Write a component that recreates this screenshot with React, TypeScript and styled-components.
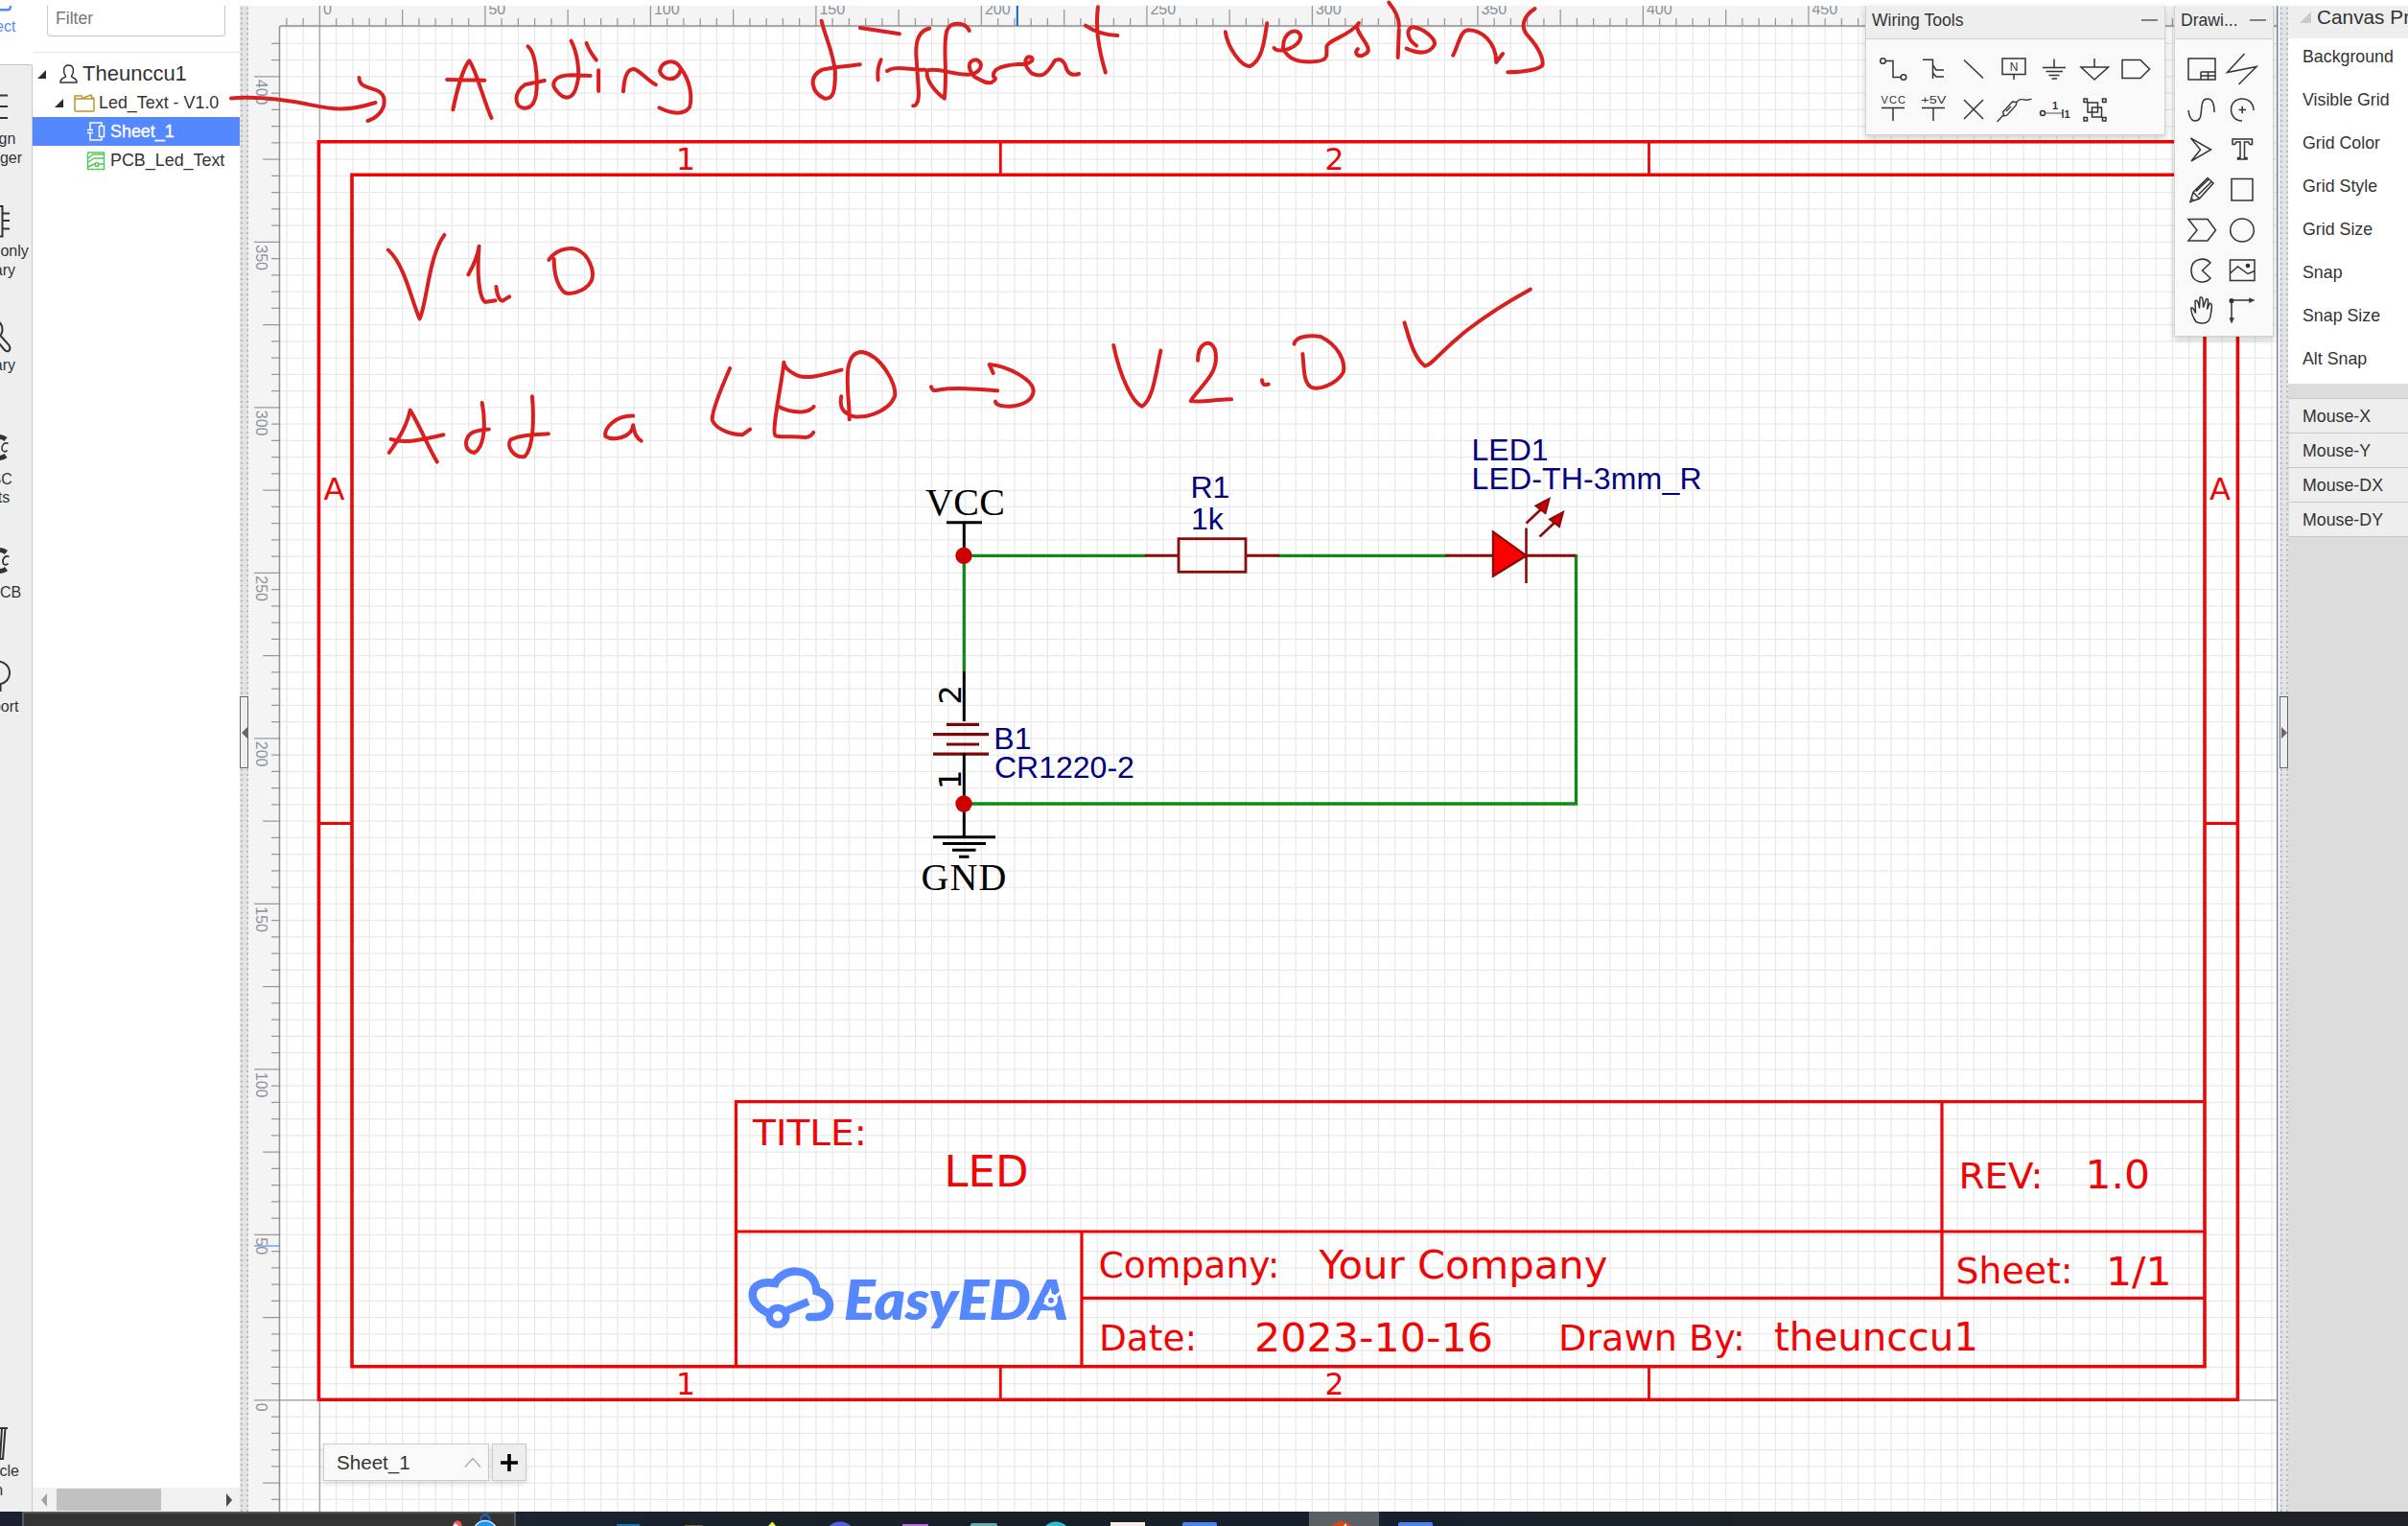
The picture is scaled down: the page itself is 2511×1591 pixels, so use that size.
import React from "react";
import styled, { createGlobalStyle } from "styled-components";

const GlobalStyle = createGlobalStyle`
  html, body, #root { margin: 0; height: 100%; }
  body { background: #fff; overflow: hidden; font-family: "Liberation Sans", Arial, sans-serif; color: #333; }
  * { box-sizing: border-box; }
`;

/* ---------- page frame ---------- */
const Page = styled.div`
  position: relative;
  display: flex;
  flex-direction: column;
  width: 2511px;
  height: 1591px;
  padding-top: 6px;
  overflow: hidden;
  background: #fff;
`;
const Main = styled.div`
  display: flex;
  flex: 1;
  min-height: 0;
`;
const Splitter = styled.div`
  flex: none;
  display: flex;
  flex-direction: column;
  width: 9px;
  padding-top: 720px;
  background-color: #e3e3e3;
  background-image: radial-gradient(circle, #b4b4b4 0.9px, transparent 1.3px);
  background-size: 6px 5.34px;
  background-position: -1px 0;
`;
const Handle = styled.div<{ $dir: "left" | "right" }>`
  display: flex;
  align-items: center;
  justify-content: flex-end;
  height: 75px;
  border: 1px solid #6b6464;
  background: #f0efef;
  &::after {
    content: "";
    border: 6px solid transparent;
    border-width: 6px ${(p) => (p.$dir === "left" ? "6px 6px 0" : "0 6px 6px")};
    ${(p) => (p.$dir === "left" ? "border-right-color" : "border-left-color")}: #6b6464;
  }
`;

/* ---------- left navigation ---------- */
const Nav = styled.nav`
  flex: none;
  width: 34px;
  display: flex;
  flex-direction: column;
  overflow: hidden;
  background: #eee;
`;
const NavItem = styled.div<{ $h: number; $top: number; $active?: boolean }>`
  flex: none;
  display: flex;
  flex-direction: column;
  align-items: center;
  width: 84px;
  height: ${(p) => p.$h}px;
  margin-left: -50px;
  padding-top: ${(p) => p.$top}px;
  border-right: 1px solid ${(p) => (p.$active ? "#fff" : "#c8c8c8")};
  border-bottom: ${(p) => (p.$active ? "1px solid #c8c8c8" : "0")};
  background: ${(p) => (p.$active ? "#fff" : "#eee")};
  color: ${(p) => (p.$active ? "#5588ff" : "#333")};
  font-size: 16px;
  line-height: 19.5px;
  text-align: center;
`;
const NavGlyph = styled.svg.attrs({ viewBox: "0 0 36 36" })`
  flex: none;
  width: 36px;
  height: 36px;
  margin: 0 0 8px 16px;
  overflow: visible;
  fill: none;
  stroke: currentColor;
  stroke-width: 2;
`;
const ActiveGlyph = styled.svg.attrs({ viewBox: "0 0 36 6" })`
  flex: none;
  width: 36px;
  height: 6px;
  margin: 0 0 6px 16px;
  fill: none;
  stroke: currentColor;
  stroke-width: 2.4;
`;

/* ---------- project tree ---------- */
const Tree = styled.aside`
  flex: none;
  width: 216px;
  display: flex;
  flex-direction: column;
  background: #fff;
`;
const FilterBox = styled.div`
  height: 49px;
  padding: 0 15px;
  border-bottom: 1px solid #e6e6e6;
`;
const Filter = styled.div`
  height: 32px;
  padding: 3px 8px;
  border: 1px solid #c6c6c6;
  border-top: 0;
  border-radius: 0 0 4px 4px;
  color: #757575;
  font-size: 17.6px;
  line-height: 20px;
`;
const Row = styled.div<{ $indent: number; $selected?: boolean; $big?: boolean }>`
  display: flex;
  align-items: center;
  height: 30px;
  margin-top: ${(p) => (p.$big ? 7 : 0)}px;
  padding-left: ${(p) => p.$indent}px;
  font-size: ${(p) => (p.$big ? 22 : 17.9)}px;
  white-space: nowrap;
  background: ${(p) => (p.$selected ? "#5588ff" : "transparent")};
  color: ${(p) => (p.$selected ? "#fff" : "#333")};
  -webkit-text-stroke: ${(p) => (p.$selected ? "0.3px #fff" : "0")};
`;
const Caret = styled.span<{ $gap: number }>`
  border-left: 9px solid transparent;
  border-bottom: 9px solid #2c2c2c;
  margin-right: ${(p) => p.$gap}px;
`;
const TreeIcon = styled.svg<{ $gap: number }>`
  flex: none;
  width: 22px;
  height: 22px;
  margin-right: ${(p) => p.$gap}px;
  fill: none;
  stroke-width: 1.5;
`;
const HScroll = styled.div`
  display: flex;
  align-items: center;
  height: 25px;
  margin-top: auto;
  padding: 0 8px;
  background: #f1f1f1;
`;
const Arrow = styled.i<{ $dir: "left" | "right" }>`
  border: 7px solid transparent;
  ${(p) => (p.$dir === "left"
    ? "border-left-width: 0; border-right: 6px solid #a3a3a3; margin-left: 1px;"
    : "border-right-width: 0; border-left: 6px solid #4a4a4a; margin-left: auto;")}
`;
const Thumb = styled.div`
  width: 109px;
  height: 23px;
  margin-left: 10px;
  background: #c1c1c1;
`;

/* ---------- canvas ---------- */
const Workspace = styled.main`
  position: relative;
  flex: none;
  width: 2118px;
  height: 100%;
`;
const Sheet = styled.svg`
  display: block;
  width: 2118px;
  height: 1570px;
`;
const FrameText = styled.text`
  font-family: Verdana, "DejaVu Sans", sans-serif;
  fill: #f00505;
`;
const PinText = styled(FrameText)`
  font-size: 32px;
  fill: #000;
`;
const RulerText = styled.text`
  font-family: "Liberation Sans", sans-serif;
  font-size: 16px;
  fill: #8b929b;
`;
const PartText = styled.text`
  font-family: "Liberation Sans", Arial, sans-serif;
  font-size: 32px;
  fill: #000080;
`;
const NetText = styled.text`
  font-family: "Liberation Serif", "Times New Roman", serif;
  font-size: 40px;
  fill: #000;
`;
const LogoText = styled.text`
  font-family: Lato, sans-serif;
  font-weight: 800;
  font-style: italic;
  font-size: 56px;
  fill: #5588ff;
`;

/* ---------- floating palettes ---------- */
const Palette = styled.section<{ $left: number; $width: number; $height: number }>`
  position: absolute;
  top: 0;
  left: ${(p) => p.$left}px;
  width: ${(p) => p.$width}px;
  height: ${(p) => p.$height}px;
  border: 1px solid #d3d3d3;
  border-top: 0;
  background: #f9f9f9;
  box-shadow: 0 3px 7px rgba(0, 0, 0, 0.2);
`;
const PaletteHead = styled.header`
  display: flex;
  align-items: center;
  justify-content: space-between;
  height: 35px;
  padding: 0 7px 4px 6px;
  border-bottom: 1px solid #cfcfcf;
  background: #eee;
  font-size: 17.6px;
`;
const Minus = styled.i`
  width: 17px;
  height: 2px;
  background: #808080;
`;
const Tools = styled.div<{ $cols: number; $pad: number }>`
  display: grid;
  grid-template-columns: repeat(${(p) => p.$cols}, 42.1px);
  grid-auto-rows: 42px;
  padding: 10px 0 0 ${(p) => p.$pad}px;
`;
const Glyph = styled.svg`
  width: 42px;
  height: 42px;
  fill: none;
  stroke: #333;
  stroke-width: 1.5;
  text { fill: #333; stroke: none; font-family: "Liberation Sans", sans-serif; }
`;

/* ---------- sheet tabs ---------- */
const Tabs = styled.div`
  position: absolute;
  left: 78px;
  top: 1499px;
  display: flex;
  gap: 3px;
  height: 39px;
`;
const Tab = styled.div`
  display: flex;
  align-items: center;
  justify-content: space-between;
  width: 173px;
  padding: 0 7px 0 13px;
  border: 1px solid #ccc;
  background: #f9f9f9;
  box-shadow: 0 3px 6px rgba(0, 0, 0, 0.12);
  font-size: 20.6px;
`;
const AddTab = styled.div`
  display: grid;
  place-items: center;
  width: 36px;
  border: 1px solid #c6cad2;
  background: #eee;
  box-shadow: 0 3px 6px rgba(0, 0, 0, 0.12);
`;

/* ---------- properties ---------- */
const Props = styled.aside`
  flex: 1;
  overflow: hidden;
  background: #dcdcdc;
`;
const PropsHead = styled.div`
  display: flex;
  align-items: center;
  height: 34px;
  padding: 0 0 11px 12px;
  background: #eee;
  font-size: 20.8px;
  white-space: nowrap;
  &::before {
    content: "";
    margin-right: 6px;
    border-left: 12px solid transparent;
    border-bottom: 12px solid #c9c9c9;
  }
`;
const PropList = styled.div`
  height: 360px;
  background: #fff;
`;
const Prop = styled.div`
  height: 45px;
  padding: 8px 0 0 15px;
  font-size: 17.8px;
  line-height: 22px;
`;
const MouseList = styled.div`
  margin: 15px 0 0 1px;
  border-top: 1px solid #c8c8c8;
`;
const MouseRow = styled.div`
  height: 36px;
  padding-left: 14px;
  border-bottom: 1px solid #c8c8c8;
  background: #eee;
  font-size: 17.8px;
  line-height: 36px;
`;

/* ---------- taskbar ---------- */
const Taskbar = styled.footer`
  flex: none;
  display: flex;
  align-items: flex-end;
  height: 15px;
  background: linear-gradient(90deg, #1c1f30 0, #1a242e 23%, #191f29 40%, #17222c 62%, #1e2226 76%, #202124 100%);
`;
const SearchBox = styled.div`
  width: 515px;
  height: 15px;
  margin-left: 23px;
  border: 2px solid #5a5a5a;
  border-bottom: 0;
  background: #333;
  svg { display: block; margin-left: auto; }
`;
const TaskIcons = styled.svg`
  display: block;
  width: 980px;
  height: 15px;
`;
const Ink = styled.svg`
  position: absolute;
  inset: 0;
  width: 2511px;
  height: 1591px;
  pointer-events: none;
  fill: none;
  stroke: #d92020;
  stroke-width: 4;
  stroke-linecap: round;
  stroke-linejoin: round;
  path { vector-effect: non-scaling-stroke; }
`;

const UNIT = 3.45;
const X0 = 333.4;
const Y0 = 1459.8;

const range = (n: number) => Array.from({ length: n }, (_, i) => i);

function Grid() {
  const d: string[] = [];
  for (let i = -2; i <= 118; i++) {
    const x = X0 + i * UNIT * 5;
    if (x > 292 && x < 2374) d.push(`M${x} 28V1576`);
  }
  for (let j = -6; j <= 83; j++) {
    const y = Y0 - j * UNIT * 5;
    if (y > 28) d.push(`M292 ${y}H2374`);
  }
  return <path d={d.join("")} stroke="#e9e9e9" strokeWidth="1.3" />;
}

function Rulers() {
  const top: string[] = [];
  for (let i = -2; i <= 118; i++) {
    const x = X0 + i * UNIT * 5;
    const start = i % 10 === 0 ? 6 : i % 5 === 0 ? 10 : 19;
    if (x < 2374) top.push(`M${x} ${start}V27`);
  }
  const side: string[] = [];
  for (let j = -6; j <= 82; j++) {
    const y = Y0 - j * UNIT * 5;
    const start = j % 10 === 0 ? 265 : j % 5 === 0 ? 274 : 283;
    side.push(`M${start} ${y}H291`);
  }
  return (
    <>
      <path d="M259 6H2374V27H291V1576H259Z" fill="#f4f4f4" />
      <path d={top.join("") + side.join("")} stroke="#999" strokeWidth="1.3" />
      <path d="M292 27H2374M291.5 27V1576" stroke="#909090" strokeWidth="1.5" fill="none" />
      {range(10).map((k) => (
        <RulerText key={k} x={X0 + k * 172.5 + 3.5} y="14.5">{k * 50}</RulerText>
      ))}
      {range(9).map((k) => (
        <RulerText key={k} transform={`translate(266.5 ${Y0 - k * 172.5 + 3})rotate(90)`}>{k * 50}</RulerText>
      ))}
      <path d="M1060.8 6V27" stroke="#0a64c8" strokeWidth="2" />
      <path d="M265 1299H292" stroke="#5b9be0" strokeWidth="1.3" />
    </>
  );
}

type Label = [string, number, number, number, number];
const frameLabels: Label[] = [
  ["TITLE:", 785, 1194, 36.5, 119],
  ["LED", 984.5, 1236.7, 44, 88],
  ["Company:", 1145.5, 1331.7, 36.5, 189],
  ["Your Company", 1375.5, 1332.7, 40, 301],
  ["Date:", 1146, 1408, 36.5, 102],
  ["2023-10-16", 1308, 1408.5, 40, 249],
  ["Drawn By:", 1625, 1408, 36.5, 195],
  ["theunccu1", 1850, 1407.7, 40, 213],
  ["REV:", 2042.5, 1238.7, 36.5, 88],
  ["1.0", 2174.5, 1239, 40, 67.5],
  ["Sheet:", 2039.5, 1338, 36.5, 122],
  ["1/1", 2196, 1340, 40, 68.5],
  ["1", 705, 176.7, 32, 20],
  ["2", 1381.5, 176.7, 32, 20],
  ["1", 705, 1454, 32, 20],
  ["2", 1381.5, 1454, 32, 20],
  ["A", 337.5, 520.7, 32, 22],
  ["A", 2304, 520.7, 32, 22],
];

function Frame() {
  return (
    <g>
      <g fill="none" stroke="#ee0606" strokeWidth="3.6">
        <path d="M332.4 147.7H2333.4V1459.3H332.4Z" />
        <path d="M367 182.3H2299V1424.7H367Z" />
        <path d="M1043.3 148V182M1719.5 148V182M1043.3 1425V1459M1719.5 1425V1459M332 858.5H367M2299 858.5H2333" strokeWidth="2.8" />
        <path d="M767.5 1424V1148.7H2299M767.5 1284H2299M1128 1284V1424M1128 1353.3H2299M2025 1148.7V1353.3" strokeWidth="3.2" />
      </g>
      {frameLabels.map(([t, x, y, s, w], i) => (
        <FrameText key={i} x={x} y={y} fontSize={s} textLength={w} lengthAdjust="spacingAndGlyphs">{t}</FrameText>
      ))}
      <g fill="none" stroke="#5588ff" strokeWidth="8.5" transform="translate(1 1)">
        <path d="M803 1369C776 1360 777 1331 808 1337" />
        <path d="M806 1341C810 1320 849 1317 850.5 1345C869 1349 869 1374 848 1372" />
        <path d="M848 1372H843" strokeLinecap="round" />
        <circle cx="810" cy="1371.3" r="8.8" strokeWidth="7.4" />
        <path d="M817 1366.5L842 1356" strokeWidth="8" />
      </g>
      <LogoText x="880" y="1376" textLength="234" lengthAdjust="spacingAndGlyphs">EasyEDA</LogoText>
      <circle cx="1096" cy="1355.7" r="5" fill="#5588ff" stroke="#fff" strokeWidth="4" />
      <path d="M1100 1352.5L1106 1347.5" stroke="#fff" strokeWidth="3" />
    </g>
  );
}

function Circuit() {
  return (
    <g fill="none" strokeWidth="3.3">
      <path d="M1005.3 579.3V700M1005 579.3H1195M1333 579.3H1508M1643.5 578V838H1005" stroke="#0f8a12" />
      <g stroke="#8b0a0a">
        <path d="M1194 579.3H1229M1299 579.3H1334M1507 579.3H1557M1591 579.3H1643" strokeWidth="3" />
        <rect x="1229" y="561.7" width="70" height="34.6" strokeWidth="2.8" />
        <path d="M1557 554.5V600.5L1591.5 579.3Z" fill="#f00" strokeWidth="2.4" />
        <path d="M1591.5 550.5V608M1591.5 545.5L1608 530M1605.5 559.5L1622 544" strokeWidth="2.6" />
        <path d="M1615.5 520L1601.5 527.5L1611.5 535ZM1630 534L1616 541.5L1626 549Z" fill="#c00" strokeWidth="2" />
      </g>
      <path
        d="M987 544.7H1024M1005.3 545V579M1005.3 700V752M1005.3 838V872M973 872.7H1038M983 879.5H1028M993 886.3H1017.5M1000 893.3H1010.5"
        stroke="#000"
        strokeWidth="3"
      />
      <path d="M987 755.3H1021M973 765.6H1031M987 776H1021M973 786.2H1031" stroke="#7b0808" strokeWidth="3.2" />
      <path d="M1005.3 785V838" stroke="#000" strokeWidth="3" />
      <circle cx="1005" cy="579.3" r="8.7" fill="#c00" />
      <circle cx="1005" cy="838" r="8.7" fill="#c00" />
      <NetText x="965" y="537" textLength="83">VCC</NetText>
      <NetText x="960.5" y="928" textLength="89">GND</NetText>
      <PartText x="1241.5" y="518.7">R1</PartText>
      <PartText x="1242" y="551.7">1k</PartText>
      <PartText x="1534.5" y="480">LED1</PartText>
      <PartText x="1534.5" y="510" textLength="240">LED-TH-3mm_R</PartText>
      <PartText x="1036.3" y="781">B1</PartText>
      <PartText x="1037" y="810.7">CR1220-2</PartText>
      <PinText transform="translate(1002 734.5) rotate(-90)">2</PinText>
      <PinText transform="translate(1002 823) rotate(-90)">1</PinText>
    </g>
  );
}

const wiringTools: React.ReactNode[] = [
  <><circle cx="10.5" cy="12.5" r="2.8" /><circle cx="32" cy="29.5" r="2.8" /><path d="M13.5 12.5H21V29.5H29" /></>,
  <path d="M10 11.3H20.5V31M20.5 17L24 22H32M20.5 25L24 29H32" />,
  <path d="M11 11.5L31 30.5" />,
  <><path d="M9 10H33V26.5H9ZM21 26.5V32" /><text x="16.8" y="22.5" fontSize="12">N</text></>,
  <path d="M21 10.5V19M9 19.5H33M12.5 23.5H30M15.5 27.5H26.5M18.5 31H24" />,
  <path d="M21 10V19M7 19H35.5L21 32Z" />,
  <path d="M7 11.5H26L35.5 21L26 30.5H7Z" />,
  <><text x="8.5" y="15.3" fontSize="11" textLength="25.5" stroke="#333">VCC</text><path d="M9 19.5H33M21 19.5V33" /></>,
  <><text x="8.3" y="15.3" fontSize="11.8" textLength="26" lengthAdjust="spacingAndGlyphs">+5V</text><path d="M9 19.5H33M21 19.5V33" /></>,
  <path d="M11 11L31 31M31 11L11 31" />,
  <path d="M3.5 34L10 27M11 28L9.500 24L19.500 13L24 13.5L23 17L14 27ZM13 23L18 18M24 13.500C29 7 32 14 39.5 10" strokeWidth="1.3" />,
  <><circle cx="9" cy="25" r="2.5" /><path d="M12 25H30" stroke="#888" /><path d="M30 21V30" /><text x="19" y="20.5" fontSize="11" fontWeight="bold">1</text><text x="31.500" y="29.5" fontSize="11" fontWeight="bold">1</text></>,
  <path d="M10 10H13.5V13.5H10ZM29.5 10H33V13.5H29.5ZM10 29.5H13.5V33H10ZM29.5 29.5H33V33H29.5ZM14 14H24.5V24H14ZM18.5 19H28.5V29H18.5Z" />,
];

const drawingTools: React.ReactNode[] = [
  <path d="M7 10H35V32H7ZM20 24H35M20 24V32M20 28H35M27.5 24V32" />,
  <path d="M23.500 5L5.500 24.5L36 18.500L17.5 37" />,
  <path d="M7 22C8 30 10 33 14 33C19 33 20 29 20.5 22C21 14 22 10 27 10C32 10 34 14 34 24" />,
  <><path d="M21 33C13 33 9.5 27 9.5 21.5C9.5 15 14 10 21 10C28 10 33 15 33 22" /><path d="M17.5 21.5H25M21.2 17.7V25.3" /></>,
  <path d="M9.5 9L30.5 21L10 33L19.5 21Z" />,
  <path d="M11 10H31.5V15.5H29L27.5 13H23.5V29.5H26V31H16.5V29.5H19V13H15L13.5 15.5H11Z" />,
  <path d="M9 33.5L12 23.5L27 8.5L33 14L18.5 30ZM12 23.5L18.5 30M15 22.5L28 10M17.5 26L31 12.5M10 30L13 32" />,
  <path d="M10 9.5H32V32H10Z" />,
  <path d="M7 9.5H27L35.5 21L27 32H7L16 21Z" />,
  <ellipse cx="21" cy="21" rx="12.3" ry="12" />,
  <path d="M30 13C24 6.5 10 8 10 21C10 34 24 36 30 29L21.5 21Z" />,
  <><path d="M8.5 10H34V31.5H8.5ZM8.5 24L16.5 17L27 24.5L34 21.5" /><circle cx="27" cy="16" r="1.6" fill="#333" /></>,
  <path d="M15 32.5C12 28.5 10 23.5 9.7 18.5C11 16.5 13 19.5 14.5 23.5L14 11C16 8.5 17.5 11.5 18.5 18.5L19 7.5C21 5.5 22.5 7.5 22.5 17.5L25.5 9C28 7.500 28 10.500 26.5 19.5L29 13.5C31.5 12.5 32 15.5 30.5 23.5C30 29.5 28 33.5 23 34C19 34.5 17 33.5 15 32.5Z" />,
  <><path d="M10 10.5V31M10 10H30" /><circle cx="10" cy="10.5" r="1.8" fill="#333" /><path d="M28.5 7.8L34 10L28.5 12.5ZM8 28.5L10 34L12.5 28.5Z" fill="#333" strokeWidth=".5" /></>,
];

function Handwriting() {
  return (
    <Ink>
      <path d="M241 102.5C267 100 293 103 320 108.5S360 117 391.5 107" />
      <path d="M374.5 81C375 96 397 88 400.5 103C402 113 395 122 383.5 126" />
      <g transform="translate(400 0) scale(.4464 .3333)">
        <path d="M162 343C170 290 185 215 200 190C215 215 235 320 252 369M148 249L236 251" />
        <path d="M337 145C355 165 358 230 358 260C358 310 350 340 328 338C305 335 303 290 330 265L376 252" />
        <path d="M438 128C452 160 460 230 452 262C445 310 425 315 408 290C385 260 400 235 440 235L483 237" />
        <path d="M474 135C480 160 490 175 497 188M502 220L502 285" />
        <path d="M560 286C562 240 570 215 585 216C600 222 615 250 636 265" />
        <path d="M695 215C680 180 650 190 645 222C650 250 685 262 695 215C715 250 722 300 715 335C700 365 665 352 644 337" />
        <path d="M1023 65C1030 110 1050 160 1055 225C1055 290 1050 310 1030 308C1000 290 990 240 1025 218C1055 208 1080 208 1113 202" />
        <path d="M1162 187C1155 205 1153 225 1155 250M1113 87L1205 106" />
        <path d="M1275 89C1250 95 1243 130 1244 170L1250 290C1250 315 1245 330 1237 331M1176 222C1195 205 1225 218 1265 218" />
        <path d="M1368 96C1360 70 1325 65 1316 95C1305 140 1318 220 1310 308C1290 290 1265 250 1270 220C1300 210 1340 240 1375 232C1400 220 1400 195 1385 187C1362 190 1365 215 1380 240C1395 250 1405 262 1420 258C1430 250 1432 245 1425 240C1420 215 1450 200 1500 200C1525 190 1515 175 1505 178C1495 190 1498 210 1515 230C1540 245 1550 230 1568 190" />
        <path d="M11 782C50 830 65 940 84 997C100 960 105 800 142 735" />
        <path d="M198 859C210 830 220 800 223 770C218 850 222 930 237 945L261 940M263 897C265 920 270 940 278 941L294 928" />
        <path d="M386 813C400 785 430 770 450 780C480 795 495 850 485 880C470 915 430 925 420 912C405 890 398 850 398 810" />
        <path d="M13 1416C35 1375 55 1330 62 1283C80 1320 105 1400 125 1445M17 1374C50 1390 100 1372 140 1360" />
        <path d="M230 1260C240 1330 235 1400 212 1416C185 1410 190 1370 205 1355C220 1345 230 1345 246 1343" />
        <path d="M347 1240C352 1310 350 1400 330 1428C305 1435 285 1395 297 1375C320 1360 350 1360 385 1357" />
        <path d="M583 1301C540 1300 515 1340 518 1365C535 1380 580 1370 583 1330C585 1355 590 1370 602 1379" />
        <path d="M809 1152C790 1210 765 1290 768 1315C780 1350 820 1360 838 1360L856 1343" />
        <path d="M1070 1157C1020 1175 985 1190 960 1170C940 1155 935 1145 935 1133C933 1180 905 1350 915 1362C925 1370 950 1362 985 1368C995 1367 1000 1362 1004 1353M920 1270C940 1285 960 1290 980 1288C995 1285 1000 1280 1005 1272" />
        <path d="M1088 1312C1090 1250 1064 1100 1118 1101C1160 1110 1200 1200 1194 1240C1180 1290 1110 1320 1085 1295C1068 1285 1066 1260 1069 1240" />
        <path d="M1279 1210C1283 1225 1285 1222 1300 1219C1340 1210 1390 1218 1434 1222M1424 1167L1415 1140C1460 1145 1520 1190 1518 1225C1515 1260 1480 1272 1455 1271C1440 1270 1430 1265 1429 1256" />
      </g>
      <g transform="translate(1100 0) scale(.523 .3333)">
        <path d="M0 190C10 180 18 190 22 210C25 230 35 238 48 231" />
        <path d="M86 22C80 90 90 170 101 227M61 80C80 100 100 110 125 111" />
        <path d="M340 100C345 150 370 205 388 208C415 190 418 120 423 73" />
        <path d="M437 150C445 170 490 150 490 112C485 85 455 95 455 150C465 190 490 195 515 193C550 190 540 170 542 145C545 125 590 110 606 72C590 95 640 150 620 168C605 185 595 165 604 153" />
        <path d="M666 8C680 35 687 60 686 82M686 92L684 180" />
        <path d="M721 143C700 120 700 85 715 85C735 90 760 120 757 140C745 175 720 165 701 152" />
        <path d="M794 173C805 140 808 95 825 94C850 95 880 130 880 195L893 168" />
        <path d="M957 27C935 50 925 85 945 115C965 150 975 185 972 205C960 220 930 225 903 226" />
        <path d="M117 1080C130 1180 155 1260 174 1271C195 1250 200 1180 211 1097" />
        <path d="M285 1127C285 1080 300 1070 310 1075C325 1090 325 1140 310 1175C295 1210 275 1240 271 1254C290 1260 325 1248 352 1249" />
        <path d="M413 1189C414 1205 418 1205 426 1202" />
        <path d="M477 1076C480 1050 510 1048 530 1053C565 1080 580 1130 575 1165C560 1205 525 1220 512 1212C495 1200 497 1150 494 1107" />
        <path d="M697 1009C705 1050 715 1120 738 1145C760 1140 780 1050 948 905" />
      </g>
    </Ink>
  );
}

export default function App() {
  return (
    <Page>
      <GlobalStyle />
      <Main>
        <Nav>
          <NavItem $h={62} $top={0} $active>
            <ActiveGlyph><path d="M8 4.3H26.5Q29 4.3 29 0" /></ActiveGlyph>
            <span>Project</span>
          </NavItem>
          <NavItem $h={131} $top={23}>
            <NavGlyph><path d="M8 8.5H26M8 20H26M8 32H26" /></NavGlyph>
            <span>Design<br />Manager</span>
          </NavItem>
          <NavItem $h={124} $top={9}>
            <NavGlyph><path d="M8 7H20.5V38.5H8ZM20.5 14.5H28M20.5 22H28M20.5 30.5H28" /></NavGlyph>
            <span>Commonly<br />Library</span>
          </NavItem>
          <NavItem $h={116} $top={4}>
            <NavGlyph><circle cx="10" cy="16.5" r="10.5" /><path d="M19 23.5L27.5 33Q29.500 37 27 39Q24.500 40 22 37L15 28.5" /></NavGlyph>
            <span>Library</span>
          </NavItem>
          <NavItem $h={119} $top={6.5}>
            <NavGlyph><path d="M24 12A11 11 0 1 0 24 29" strokeWidth="5" /><path d="M26.500 16.5C23 14.500 19.500 18 20 22C20.500 25.500 24 25.500 25.500 23.500" strokeWidth="1.6" /></NavGlyph>
            <span>LCSC<br />Parts</span>
          </NavItem>
          <NavItem $h={122} $top={5.5}>
            <NavGlyph><path d="M24.500 12A11 11 0 1 0 24.500 29" strokeWidth="5" /><path d="M27.500 16.5C24 14.500 20.500 18 21 22C21.500 25.500 25 25.500 26.500 23.500" strokeWidth="1.8" /></NavGlyph>
            <span>JLCPCB</span>
          </NavItem>
          <NavItem $h={794} $top={2.5}>
            <NavGlyph><circle cx="16" cy="18.5" r="12" /><path d="M18.5 30V38" /></NavGlyph>
            <span>Support</span>
          </NavItem>
          <NavItem $h={102} $top={6}>
            <NavGlyph><path d="M4 9H26M23.5 9L21 41H8M20 9L18 41" /></NavGlyph>
            <span>Recycle<br />Bin</span>
          </NavItem>
        </Nav>
        <Tree>
          <FilterBox><Filter>Filter</Filter></FilterBox>
          <Row $indent={5} $big>
            <Caret $gap={13} />
            <TreeIcon $gap={3} viewBox="0 0 22 22" stroke="#333">
              <path d="M7.500 13.500C4.500 9.500 4.500 2 10.500 2S16.500 9.500 13.500 13.500C13.500 15.500 19 14.500 19 20H2C2 14.500 7.500 15.500 7.500 13.500Z" />
            </TreeIcon>
            Theunccu1
          </Row>
          <Row $indent={23}>
            <Caret $gap={11} />
            <TreeIcon $gap={4} viewBox="0 0 22 22" stroke="#c0962e">
              <path d="M1 7V19Q1 20 2 20H20Q21 20 21 19V7ZM1 7V4H8L9 7M10 6L18 3L19 7M20 7V5" />
            </TreeIcon>
            Led_Text - V1.0
          </Row>
          <Row $indent={56} $selected>
            <TreeIcon $gap={3} viewBox="0 0 22 22" stroke="#fff">
              <path d="M4 9V2H16V5M4 13V20H16V17M1 9.500H7M1 12.500H7M13.500 5.500H18.500V16.500H13.500Z" />
            </TreeIcon>
            Sheet_1
          </Row>
          <Row $indent={56}>
            <TreeIcon $gap={3} viewBox="0 0 22 22" stroke="#54c85c">
              <path d="M1.500 3H18.500V20.500H1.500ZM2 9L7 5H18M2 13L8 9H18M2 18L8 15H10M13 15H18" />
              <circle cx="11" cy="15.500" r="1.900" />
            </TreeIcon>
            PCB_Led_Text
          </Row>
          <HScroll><Arrow $dir="left" /><Thumb /><Arrow $dir="right" /></HScroll>
        </Tree>
        <Splitter><Handle $dir="left" /></Splitter>
        <Workspace>
          <Sheet viewBox="259 6 2118 1570">
            <Grid />
            <path d="M333.4 6V1576M265 1459.8H2374" stroke="#aaa" strokeWidth="1.5" />
            <Rulers />
            <Frame />
            <Circuit />
            <path d="M2374.800 6V1576" stroke="#4d6f8f" strokeWidth="1.300" />
            <path d="M2376.300 6V1576" stroke="#fff" />
          </Sheet>
          <Palette $left={1686} $width={313} $height={135}>
            <PaletteHead>Wiring Tools<Minus /></PaletteHead>
            <Tools $cols={7} $pad={7}>
              {wiringTools.map((g, i) => <Glyph key={i} viewBox="0 0 42 42">{g}</Glyph>)}
            </Tools>
          </Palette>
          <Palette $left={2008} $width={104} $height={345}>
            <PaletteHead>Drawi...<Minus /></PaletteHead>
            <Tools $cols={2} $pad={7}>
              {drawingTools.map((g, i) => <Glyph key={i} viewBox="0 0 42 42">{g}</Glyph>)}
            </Tools>
          </Palette>
          <Tabs>
            <Tab>
              Sheet_1
              <svg width="18" height="12" fill="none" stroke="#aaa" strokeWidth="1.3"><path d="M1 10.500L9 1.500L17 10.500" /></svg>
            </Tab>
            <AddTab>
              <svg width="18" height="18" stroke="#000" strokeWidth="3.6"><path d="M0 9H18M9 0V18" /></svg>
            </AddTab>
          </Tabs>
        </Workspace>
        <Splitter><Handle $dir="right" /></Splitter>
        <Props>
          <PropsHead>Canvas Properties</PropsHead>
          <PropList>
            {["Background", "Visible Grid", "Grid Color", "Grid Style", "Grid Size", "Snap", "Snap Size", "Alt Snap"].map((p) => (
              <Prop key={p}>{p}</Prop>
            ))}
          </PropList>
          <MouseList>
            {["Mouse-X", "Mouse-Y", "Mouse-DX", "Mouse-DY"].map((m) => <MouseRow key={m}>{m}</MouseRow>)}
          </MouseList>
        </Props>
      </Main>
      <Taskbar>
        <SearchBox>
          <svg width="80" height="13" viewBox="457 1578 80 13">
            <circle cx="478" cy="1590" r="4.500" fill="#f05a50" />
            <path d="M473 1591L476 1588L479 1591Z" fill="#fff" />
            <circle cx="507" cy="1584" r="4.500" fill="none" stroke="#1c5fc0" strokeWidth="2.500" />
            <circle cx="507" cy="1598" r="12.500" fill="#1b95ee" stroke="#cfe8ff" strokeWidth="1.500" />
          </svg>
        </SearchBox>
        <TaskIcons viewBox="538 1576 980 15">
          <rect x="1365" y="1576" width="73" height="15" fill="#5c6065" />
          <rect x="643" y="1589" width="24" height="2" fill="#1272b8" />
          <rect x="714" y="1590" width="19" height="1" fill="#6b5b4a" />
          <path d="M801 1591L805.500 1586.500L809 1591Z" fill="#f5ee3c" />
          <circle cx="876" cy="1603" r="16.500" fill="#5560e8" />
          <rect x="941" y="1589" width="27" height="2" fill="#b96bdc" />
          <rect x="1012" y="1588" width="28" height="4" rx="2" fill="#62aaae" />
          <circle cx="1101" cy="1602" r="15.500" fill="#2fbcd3" />
          <rect x="1158" y="1587" width="36" height="4" fill="#fbeae6" />
          <rect x="1233" y="1587" width="36" height="6" rx="2" fill="#4a82ee" />
          <circle cx="1399" cy="1598" r="12" fill="#d24a1a" />
          <path d="M1401 1591L1404 1588V1591Z" fill="#fff" />
          <rect x="1458" y="1587" width="36" height="6" rx="2" fill="#4a82ee" />
        </TaskIcons>
      </Taskbar>
      <Handwriting />
    </Page>
  );
}
